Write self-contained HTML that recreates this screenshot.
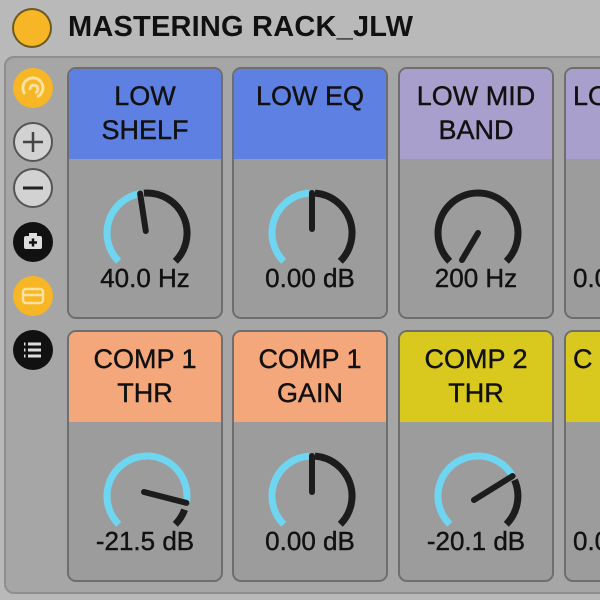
<!DOCTYPE html>
<html><head><style>
html,body{margin:0;padding:0;overflow:hidden;width:600px;height:600px}
body{background:#b9b9b9;font-family:"Liberation Sans",sans-serif;position:relative}
.inner{position:absolute;left:4px;top:56px;width:610px;height:534px;background:#a6a6a6;border-radius:10px;border:2px solid #8e8e8e}
.title{position:absolute;left:68px;top:11px;font-size:29px;font-weight:bold;color:#111;letter-spacing:0.2px}
.dot{position:absolute;left:14px;top:10px;width:36px;height:36px;border-radius:50%;background:#f7b625;box-shadow:0 0 0 2px #6d5a20}
.p{position:absolute;width:152px;height:248px;border:2px solid #6e6e6e;border-radius:9px;background:#9c9c9c;overflow:hidden}
.h{height:90px;text-align:center;font-size:27px;line-height:34px;color:#111;padding-top:10px;box-sizing:border-box;white-space:nowrap;-webkit-text-stroke:0.4px #111}
.v{position:absolute;left:0;width:100%;text-align:center;top:194px;font-size:26px;color:#111;white-space:nowrap;-webkit-text-stroke:0.4px #111}
svg.k{position:absolute;left:26px;top:118px}
.ic{position:absolute;left:13px;width:40px;height:40px;border-radius:50%;box-sizing:border-box}
</style></head><body>
<div class="dot"></div>
<div class="title">MASTERING RACK_JLW</div>
<div class="inner"></div>

<div class="ic" style="top:68px;background:#f7b625"><svg width="40" height="40"><path d="M12 26 A10 10 0 1 1 24 29" fill="none" stroke="#fce2a0" stroke-width="3"/><path d="M17 22 A4 4 0 1 1 22 25" fill="none" stroke="#fce2a0" stroke-width="3"/></svg></div>
<div class="ic" style="top:122px;background:#d2d2d2;border:2px solid #555"><svg width="36" height="36"><path d="M8 18H28M18 8V28" stroke="#444" stroke-width="2.5"/></svg></div>
<div class="ic" style="top:168px;background:#d2d2d2;border:2px solid #555"><svg width="36" height="36"><path d="M8 18H28" stroke="#222" stroke-width="3"/></svg></div>
<div class="ic" style="top:222px;background:#111"><svg width="40" height="40"><rect x="11" y="14" width="18" height="13" rx="2" fill="#ddd"/><rect x="16" y="11" width="8" height="4" fill="#ddd"/><path d="M16 20.5H24M20 16.5V24.5" stroke="#111" stroke-width="2.5"/></svg></div>
<div class="ic" style="top:276px;background:#f7b625"><svg width="40" height="40"><rect x="10" y="13" width="20" height="14" rx="3" fill="none" stroke="#fce2a0" stroke-width="2.5"/><path d="M11 19H29" stroke="#fce2a0" stroke-width="2.5"/></svg></div>
<div class="ic" style="top:330px;background:#111"><svg width="40" height="40"><path d="M15 14H28M15 20H28M15 26H28M11 14H12.5M11 20H12.5M11 26H12.5" stroke="#ddd" stroke-width="3"/></svg></div>

<!-- row 1 -->
<div class="p" style="left:67px;top:67px"><div class="h" style="background:#5d80e2">LOW<br>SHELF</div>
<svg class="k" width="104" height="92" viewBox="-52 -46 104 92"><path d="M-28.3 28.3 A40 40 0 0 1 -6.9 -39.4" fill="none" stroke="#6fd6f2" stroke-width="7"/><path d="M-3 -39.9 A40 40 0 0 1 28.3 28.3" fill="none" stroke="#1c1c1c" stroke-width="7"/><path d="M-1.2 -2 L-6.9 -39.4" stroke="#1c1c1c" stroke-width="6" stroke-linecap="round"/></svg>
<div class="v">40.0 Hz</div></div>
<div class="p" style="left:232px;top:67px"><div class="h" style="background:#5d80e2">LOW EQ</div>
<svg class="k" width="104" height="92" viewBox="-52 -46 104 92"><path d="M-28.3 28.3 A40 40 0 0 1 -3 -39.9" fill="none" stroke="#6fd6f2" stroke-width="7"/><path d="M3 -39.9 A40 40 0 0 1 28.3 28.3" fill="none" stroke="#1c1c1c" stroke-width="7"/><path d="M0 -4 L0 -40" stroke="#1c1c1c" stroke-width="6" stroke-linecap="round"/></svg>
<div class="v">0.00 dB</div></div>
<div class="p" style="left:398px;top:67px"><div class="h" style="background:#a99fcc">LOW MID<br>BAND</div>
<svg class="k" width="104" height="92" viewBox="-52 -46 104 92"><path d="M-28.3 28.3 A40 40 0 1 1 28.3 28.3" fill="none" stroke="#1c1c1c" stroke-width="7"/><path d="M0 0 L-16 27" stroke="#1c1c1c" stroke-width="6" stroke-linecap="round"/></svg>
<div class="v">200 Hz</div></div>
<div class="p" style="left:564px;top:67px;width:60px"><div class="h" style="background:#a99fcc;text-align:left;padding-left:7px">LOW<br>&nbsp;</div>
<svg class="k" width="104" height="92" viewBox="-52 -46 104 92"><path d="M-28.3 28.3 A40 40 0 1 1 28.3 28.3" fill="none" stroke="#1c1c1c" stroke-width="7"/></svg>
<div class="v" style="text-align:left;left:7px">0.00</div></div>

<!-- row 2 -->
<div class="p" style="left:67px;top:330px"><div class="h" style="background:#f4a77b">COMP 1<br>THR</div>
<svg class="k" width="104" height="92" viewBox="-52 -46 104 92"><path d="M-28.3 28.3 A40 40 0 1 1 39.4 6.9" fill="none" stroke="#6fd6f2" stroke-width="7"/><path d="M37.6 13.7 A40 40 0 0 1 28.3 28.3" fill="none" stroke="#1c1c1c" stroke-width="7"/><path d="M-3 -4 L39.4 6.9" stroke="#1c1c1c" stroke-width="6" stroke-linecap="round"/></svg>
<div class="v">-21.5 dB</div></div>
<div class="p" style="left:232px;top:330px"><div class="h" style="background:#f4a77b">COMP 1<br>GAIN</div>
<svg class="k" width="104" height="92" viewBox="-52 -46 104 92"><path d="M-28.3 28.3 A40 40 0 0 1 -3 -39.9" fill="none" stroke="#6fd6f2" stroke-width="7"/><path d="M3 -39.9 A40 40 0 0 1 28.3 28.3" fill="none" stroke="#1c1c1c" stroke-width="7"/><path d="M0 -4 L0 -40" stroke="#1c1c1c" stroke-width="6" stroke-linecap="round"/></svg>
<div class="v">0.00 dB</div></div>
<div class="p" style="left:398px;top:330px"><div class="h" style="background:#d9c91e">COMP 2<br>THR</div>
<svg class="k" width="104" height="92" viewBox="-52 -46 104 92"><path d="M-28.3 28.3 A40 40 0 1 1 34.6 -20" fill="none" stroke="#6fd6f2" stroke-width="7"/><path d="M36.5 -16 A40 40 0 0 1 28.3 28.3" fill="none" stroke="#1c1c1c" stroke-width="7"/><path d="M-4 4 L34.6 -20" stroke="#1c1c1c" stroke-width="6" stroke-linecap="round"/></svg>
<div class="v">-20.1 dB</div></div>
<div class="p" style="left:564px;top:330px;width:60px"><div class="h" style="background:#d9c91e;text-align:left;padding-left:7px">C<br>&nbsp;</div>
<div class="v" style="text-align:left;left:7px">0.00</div></div>
</body></html>
